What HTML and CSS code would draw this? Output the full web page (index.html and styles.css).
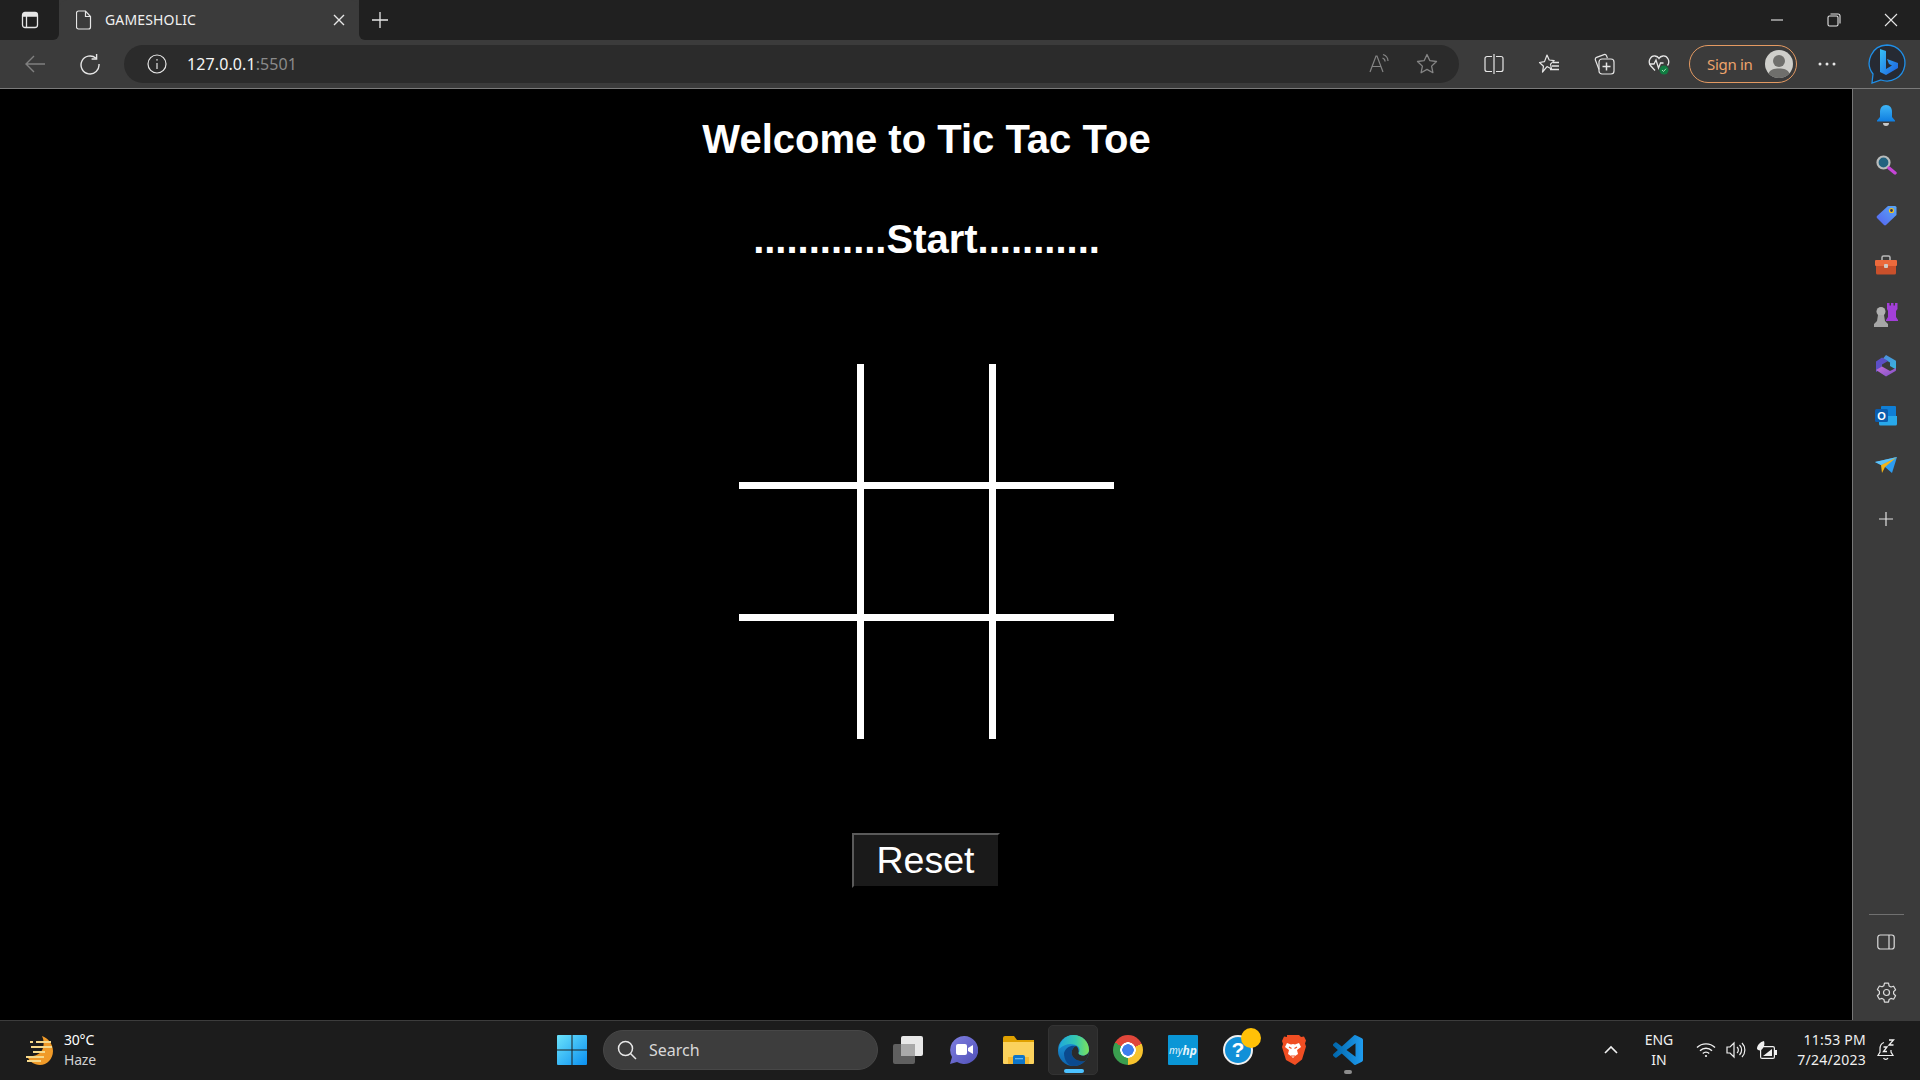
FILE: index.html
```html
<!DOCTYPE html>
<html lang="en">
<head>
    <meta charset="UTF-8" />
    <title>GAMESHOLIC</title>
    <link rel="stylesheet" href="styles.css">
</head>
<body>

<div class="browser">

    <!-- Вкладки -->
    <div class="tabstrip">
        <div class="tab-actions">
            <svg width="18" height="18" viewBox="0 0 18 18" fill="none" stroke="#e6e6e6" stroke-width="1.3"><rect x="1.5" y="1.5" width="15" height="15" rx="2.5"/><path d="M1.5 5h15M5.5 5v11.5"/><path d="M2 2h14v3H2z" fill="#e6e6e6" stroke="none"/></svg>
        </div>
        <div class="tab">
            <svg width="16" height="20" viewBox="0 0 16 20" fill="none" stroke="#e6e6e6" stroke-width="1.2"><path d="M2.5 1h7l5 5.5V17a2 2 0 0 1-2 2h-10a2 2 0 0 1-2-2V3a2 2 0 0 1 2-2z"/><path d="M9.5 1v5.5h5"/></svg>
            <span class="tab-title">GAMESHOLIC</span>
            <svg class="tab-close" width="16" height="16" viewBox="0 0 16 16" stroke="#e6e6e6" stroke-width="1.4"><path d="M3 3l10 10M13 3L3 13"/></svg>
        </div>
        <div class="tab-rest">
            <div class="new-tab">
                <svg width="18" height="18" viewBox="0 0 18 18" stroke="#e6e6e6" stroke-width="1.3"><path d="M9 1v16M1 9h16"/></svg>
            </div>
            <div class="window-controls">
                <div class="window-btn"><svg width="14" height="14" viewBox="0 0 14 14" stroke="#e6e6e6" stroke-width="1.1"><path d="M1 7h12"/></svg></div>
                <div class="window-btn"><svg width="14" height="14" viewBox="0 0 14 14" fill="none" stroke="#e6e6e6" stroke-width="1.1"><rect x="1" y="3" width="10" height="10" rx="1.5"/><path d="M3.5 1H11a2 2 0 0 1 2 2v7.5"/></svg></div>
                <div class="window-btn window-btn-close"><svg width="14" height="14" viewBox="0 0 14 14" stroke="#e6e6e6" stroke-width="1.1"><path d="M1 1l12 12M13 1L1 13"/></svg></div>
            </div>
        </div>
    </div>

    <!-- Панель адреса -->
    <div class="toolbar">
        <div class="tool-btn">
            <svg width="22" height="20" viewBox="0 0 22 20" fill="none" stroke="#808080" stroke-width="1.4"><path d="M21 10H2M10 2l-8 8 8 8"/></svg>
        </div>
        <div class="tool-btn">
            <svg width="22" height="22" viewBox="0 0 22 22" fill="none" stroke="#e6e6e6" stroke-width="1.4"><path d="M17 5.2A9 9 0 1 0 20 11"/><path d="M17.6 1v5h-5"/></svg>
        </div>
        <div class="address">
            <svg class="address-info" width="20" height="20" viewBox="0 0 20 20" fill="none" stroke="#e6e6e6" stroke-width="1.2"><circle cx="10" cy="10" r="9"/><path d="M10 9v6"/><path d="M10 5.2v1.4" stroke-width="1.5"/></svg>
            <span class="url">127.0.0.1<span class="url-port">:5501</span></span>
            <div class="address-end">
                <div class="address-btn">
                    <svg width="24" height="20" viewBox="0 0 24 20" fill="none" stroke="#858585" stroke-width="1.2"><path d="M1 19L7 3h1l6 16M3.4 13.5h8.4"/><path d="M14 1.5c3 1 5 3.3 5 6.5M13.5 5c1.6.6 2.6 1.8 2.6 3.4"/></svg>
                </div>
                <div class="address-btn">
                    <svg width="22" height="21" viewBox="0 0 22 21" fill="none" stroke="#858585" stroke-width="1.3"><path d="M11 1.5l2.9 6.2 6.6.8-4.9 4.6 1.3 6.6-5.9-3.3-5.9 3.3 1.3-6.6L1.5 8.500l6.600-.8z" stroke-linejoin="round"/></svg>
                </div>
            </div>
        </div>
        <div class="tool-group">
            <div class="tool-btn">
                <svg width="20" height="22" viewBox="0 0 20 22" fill="none" stroke="#e6e6e6" stroke-width="1.2"><path d="M8 3.500H3a2 2 0 0 0-2 2v11a2 2 0 0 0 2 2h5M12 3.500h5a2 2 0 0 1 2 2v11a2 2 0 0 1-2 2h-5M10 1v20"/></svg>
            </div>
            <div class="tool-btn">
                <svg width="22" height="22" viewBox="0 0 22 22" fill="none" stroke="#e6e6e6" stroke-width="1.2"><path d="M9 2l2.200 5 5 .6-3.700 3.500 1 5-4.500-2.500L4.500 19l1-5.800L1.500 9.500l5-.9z" stroke-linejoin="round"/><path d="M15 9.500h6M14 13h7M12 16.500h9" stroke-width="1.4"/></svg>
            </div>
            <div class="tool-btn">
                <svg width="22" height="22" viewBox="0 0 22 22" fill="none" stroke="#e6e6e6" stroke-width="1.2"><path d="M6 16.500L2.400 7a2 2 0 0 1 1.200-2.600L11 1.600a2 2 0 0 1 2.500 1.200l.9 2.300"/><rect x="6" y="6" width="15" height="15" rx="3"/><path d="M13.500 9.500v8M9.500 13.500h8" stroke-width="1.5"/></svg>
            </div>
            <div class="tool-btn">
                <svg width="22" height="22" viewBox="0 0 22 22" fill="none"><path d="M7 17.500L2.500 12.500C-.5 8.500 2.500 2.500 7 3c2 .2 3.300 1.200 4 2.500C11.700 4.200 13 3.200 15 3c4.500-.5 7.500 5.500 4.500 9.500" stroke="#e6e6e6" stroke-width="1.3"/><path d="M1 11h5l2-4 2.500 8 2-5h3" stroke="#e6e6e6" stroke-width="1.3"/><circle cx="16" cy="17" r="4.500" fill="#107c41"/><path d="M14 17l1.500 1.500 2.500-2.800" stroke="#9fe0b5" stroke-width="1"/></svg>
            </div>
        </div>
        <div class="signin">
            <span class="signin-text">Sign in</span>
            <span class="avatar">
                <svg width="28" height="28" viewBox="0 0 28 28"><circle cx="14" cy="14" r="14" fill="#cfcfcb"/><circle cx="14" cy="11" r="6" fill="#6f6f6c"/><path d="M3.500 23.500C5 19.500 9 18.500 14 18.500s9 1 10.500 5A14 14 0 0 1 14 28 14 14 0 0 1 3.500 23.500z" fill="#6f6f6c"/></svg>
            </span>
        </div>
        <div class="more-btn">
            <svg width="18" height="4" viewBox="0 0 18 4" fill="#e6e6e6"><circle cx="2" cy="2" r="1.500"/><circle cx="9" cy="2" r="1.500"/><circle cx="16" cy="2" r="1.500"/></svg>
        </div>
        <div class="bing-btn">
            <svg width="38" height="42" viewBox="0 0 38 42" fill="none">
                <defs><linearGradient id="bingB" x1="0" y1="0" x2="1" y2="1"><stop offset="0" stop-color="#36c0f5"/><stop offset="1" stop-color="#1c5fe0"/></linearGradient></defs>
                <path d="M19 2a18 18 0 1 1-6 35l-9 3 1-9A18 18 0 0 1 19 2z" stroke="#1f8fe8" stroke-width="1.3" fill="#262a33"/>
                <path d="M12 6l6 2v18l6-3.500-3-1.500-2-5 11 4v5l-12 7-6-3z" fill="url(#bingB)"/>
            </svg>
        </div>
    </div>

    <div class="page-row">
        <!-- Страница игры -->
        <main class="game">
            <h1 class="game-title">Welcome to Tic Tac Toe</h1>
            <h2 class="game-status">............Start...........</h2>
            <div class="board">
                <div class="cell"></div><div class="cell"></div><div class="cell"></div>
                <div class="cell"></div><div class="cell"></div><div class="cell"></div>
                <div class="cell"></div><div class="cell"></div><div class="cell"></div>
            </div>
            <button class="reset-btn">Reset</button>
        </main>

        <!-- Боковая панель -->
        <aside class="sidebar">
            <div class="side-item">
                <svg width="20" height="22" viewBox="0 0 20 22"><defs><linearGradient id="bell" x1="0" y1="0" x2="0" y2="1"><stop offset="0" stop-color="#3fb6f7"/><stop offset="1" stop-color="#0f7de0"/></linearGradient></defs><path d="M7 19h6a3 3 0 0 1-6 0z" fill="#c8c8c8"/><path d="M10 1c4 0 6 3 6 7v5l3 3.500v1H1v-1L4 13V8c0-4 2-7 6-7z" fill="url(#bell)"/></svg>
            </div>
            <div class="side-item">
                <svg width="22" height="22" viewBox="0 0 22 22"><circle cx="8.500" cy="8.500" r="6" fill="#22627f" stroke="#b9bcbc" stroke-width="2.200"/><path d="M14 14l6 5" stroke="#c545d6" stroke-width="3.400" stroke-linecap="round"/></svg>
            </div>
            <div class="side-item">
                <svg width="21" height="21" viewBox="0 0 21 21"><defs><linearGradient id="tagFill" x1="0" y1="1" x2="1" y2="0"><stop offset="0" stop-color="#5562f0"/><stop offset="1" stop-color="#59a8f5"/></linearGradient></defs><path d="M12 1h7a1.500 1.500 0 0 1 1.500 1.500V10L10 20a1.500 1.500 0 0 1-2 0L1 13a1.500 1.500 0 0 1 0-2z" fill="url(#tagFill)"/><circle cx="15.500" cy="5.500" r="2" fill="#2a2f60" stroke="#f5c518" stroke-width="1.200"/></svg>
            </div>
            <div class="side-item">
                <svg width="24" height="20" viewBox="0 0 24 20"><path d="M8 5V2.500A1.500 1.500 0 0 1 9.500 1h5A1.500 1.500 0 0 1 16 2.500V5" fill="none" stroke="#b9b9b9" stroke-width="1.500"/><rect x="1" y="5" width="22" height="6" rx="1" fill="#ec6a3c"/><path d="M2 11h20v7a1.500 1.500 0 0 1-1.500 1.500h-17A1.500 1.500 0 0 1 2 18z" fill="#c9502b"/><rect x="10" y="9" width="4" height="4" rx="1" fill="#cfc9c4"/></svg>
            </div>
            <div class="side-item">
                <svg width="24" height="24" viewBox="0 0 24 24"><path d="M13 0h2.500v2.500h1.500V0h2.500v2.500H21V0h2.500v6L22 8v6l2 3v1H12v-1l2-3V8l-1-2z" fill="#a23fd8"/><circle cx="7" cy="8.500" r="4.500" fill="#b0b0b0"/><path d="M4 12h6l1 6 3 3v3H0v-3l3-3z" fill="#a6a6a6"/></svg>
            </div>
            <div class="side-item">
                <svg width="22" height="23" viewBox="0 0 22 23"><defs><linearGradient id="m365a" x1="0" y1="0" x2="1" y2="1"><stop offset="0" stop-color="#4f8bdc"/><stop offset="1" stop-color="#36b5dd"/></linearGradient><linearGradient id="m365b" x1="0" y1="0" x2="1" y2="1"><stop offset="0" stop-color="#c56fd8"/><stop offset="1" stop-color="#7e4fc8"/></linearGradient></defs><path d="M11 1l9.500 5.500a1 1 0 0 1 .5.900v8L15 12V8.500L8 4.500z" fill="url(#m365a)"/><path d="M1 7.400l6-3.900L13 7 7 10.500v4L1 18z" fill="#5c4fc6"/><path d="M1 16l6-3.500 8 4.500 6-3v2a1 1 0 0 1-.5.900L11 22.500z" fill="url(#m365b)"/></svg>
            </div>
            <div class="side-item">
                <svg width="22" height="21" viewBox="0 0 22 21"><rect x="6" y="1" width="15" height="14" rx="1" fill="#0f7fd6"/><path d="M4 11h18v8a1.500 1.500 0 0 1-1.500 1.500H5.500A1.500 1.500 0 0 1 4 19z" fill="#28a8ea"/><rect x="0" y="4" width="13" height="13" rx="1.500" fill="#0b5cad"/><text x="6.500" y="14.500" class="outlook-o">O</text></svg>
            </div>
            <div class="side-item">
                <svg width="22" height="18" viewBox="0 0 22 18"><path d="M0 6l22-5-5 16-7-6z" fill="#2d9cf0"/><path d="M22 1L10 11l-3 6-1-8z" fill="#f2b418"/><path d="M22 1L6 9 0 6z" fill="#5fc3f8"/></svg>
            </div>
            <div class="side-item side-add">
                <svg width="16" height="16" viewBox="0 0 16 16" stroke="#e0e0e0" stroke-width="1.200"><path d="M8 1v14M1 8h14"/></svg>
            </div>
            <div class="side-footer">
                <div class="side-line"></div>
                <div class="side-item">
                    <svg width="18" height="16" viewBox="0 0 18 16" fill="none" stroke="#dcdcdc" stroke-width="1.200"><rect x=".8" y="1" width="16.400" height="14" rx="2.500"/><path d="M12 1v14"/></svg>
                </div>
                <div class="side-item">
                    <svg width="21" height="21" viewBox="0 0 21 21" fill="none" stroke="#dcdcdc" stroke-width="1.200" stroke-linejoin="round"><circle cx="10.500" cy="10.500" r="3"/><path d="M8.500 1.200h4l.6 2.700 1.900 1.100 2.600-.8 2 3.500-2 1.900v2.200l2 1.900-2 3.500-2.600-.8-1.900 1.100-.6 2.700h-4l-.6-2.700-1.900-1.100-2.600.8-2-3.500 2-1.900V9.400l-2-1.900 2-3.500 2.600.8 1.900-1.100z"/></svg>
                </div>
            </div>
        </aside>
    </div>
</div>

<!-- Панель задач -->
<footer class="taskbar">
    <div class="weather">
        <svg width="30" height="29" viewBox="0 0 30 29"><path d="M17 0c6 2 11 8 11 15 0 8-6 14-13 14-6 0-11-4-13-9 6 1 14-1 16-8 1-4 1-8-1-12z" fill="#f09a28"/><g stroke="#f6d98b" stroke-width="2.200"><path d="M5 6h3M11 6h15M6 11h21M8 16h12M1 21h18M2 25h14"/></g></svg>
        <div class="weather-text">
            <span>30°C</span>
            <span class="weather-desc">Haze</span>
        </div>
    </div>

    <svg class="start" width="30" height="30" viewBox="0 0 30 30"><defs><linearGradient id="win" x1="0" y1="0" x2="1" y2="1"><stop offset="0" stop-color="#6be3fb"/><stop offset="1" stop-color="#0a8ff0"/></linearGradient></defs><path d="M0 1a1 1 0 0 1 1-1h13.500v14.500H0zM15.500 0H29a1 1 0 0 1 1 1v13.500H15.500zM0 15.500h14.500V30H1a1 1 0 0 1-1-1zM15.500 15.500H30V29a1 1 0 0 1-1 1H15.500z" fill="url(#win)"/></svg>

    <div class="search">
        <svg width="20" height="20" viewBox="0 0 20 20" fill="none" stroke="#e8e8e8" stroke-width="1.500"><circle cx="8.500" cy="8.500" r="7"/><path d="M13.500 13.500L19 19"/></svg>
        <span class="search-text">Search</span>
    </div>

    <div class="task-apps">
        <div class="task-app">
            <svg width="30" height="28" viewBox="0 0 30 28"><rect x="0" y="8" width="22" height="20" rx="2" fill="#5f5f5f"/><rect x="8" y="0" width="22" height="20" rx="2" fill="#e8e8e8"/><rect x="8" y="8" width="14" height="12" fill="#a9a9a9"/></svg>
        </div>
        <div class="task-app">
            <svg width="30" height="30" viewBox="0 0 30 30"><defs><linearGradient id="meet" x1="0" y1="0" x2="1" y2="1"><stop offset="0" stop-color="#7f7fe0"/><stop offset="1" stop-color="#5050b8"/></linearGradient></defs><path d="M16 1a14 14 0 1 1-7 26l-7 2 2-7A14 14 0 0 1 16 1z" fill="url(#meet)"/><rect x="8" y="9" width="11" height="11" rx="2" fill="#fff"/><path d="M20 13l5-3v9l-5-3z" fill="#fff"/></svg>
        </div>
        <div class="task-app">
            <svg width="31" height="28" viewBox="0 0 31 28"><path d="M0 2a2 2 0 0 1 2-2h9l3 4h17v5H0z" fill="#e0a100"/><path d="M0 6h31v21a1 1 0 0 1-1 1H1a1 1 0 0 1-1-1z" fill="#fbd25d"/><path d="M5 21h21v7H5z" fill="#f4b933"/><path d="M10 21a2 2 0 0 1 2-2h8a2 2 0 0 1 2 2v7H10z" fill="#0e75c8"/><rect x="12" y="22" width="8" height="1.300" fill="#66b7ee"/></svg>
        </div>
        <div class="task-app task-app-active">
            <svg width="31" height="31" viewBox="0 0 31 31"><defs><linearGradient id="edgeBlue" x1="0" y1="0" x2="0" y2="1"><stop offset="0" stop-color="#1fa0de"/><stop offset="1" stop-color="#0d62ad"/></linearGradient><linearGradient id="edgeGreen" x1="0" y1="0" x2="1" y2="0"><stop offset="0" stop-color="#1fa8dc"/><stop offset=".55" stop-color="#35c8b0"/><stop offset="1" stop-color="#7de25a"/></linearGradient></defs><circle cx="15.500" cy="15.500" r="15.500" fill="url(#edgeBlue)"/><path d="M6 18C8 12 13 10 18 11c-4 2-5 6-4 9 2 5 8 7 13 6-4 4-8 5-11.500 5C10 31 6 25 6 18z" fill="#0b4a8f"/><path d="M31 15.500A15.500 15.500 0 0 1 27 26c-5 1-11-1-13-6-1-3 0-7 4-9 2 1 3 4 2.500 7 .5 2 3.500 2.500 4.500 2.500 3 0 6-2.500 6-5z" fill="#2b2b2b"/><path d="M15.500 0C24 0 31 6.500 31 15c0 3-3 5.500-6 5.500-2.500 0-4.500-1-4.500-2.500 1.500-2 1.500-4.500-.5-6.500-4-4-13-3.500-19 2.500C2 6 8 0 15.500 0z" fill="url(#edgeGreen)"/></svg>
            <span class="task-indicator"></span>
        </div>
        <div class="task-app">
            <span class="chrome"></span>
        </div>
        <div class="task-app">
            <span class="myhp">my<b class="myhp-bold">hp</b></span>
        </div>
        <div class="task-app">
            <span class="help">?</span>
            <span class="help-badge"></span>
        </div>
        <div class="task-app">
            <svg width="26" height="30" viewBox="0 0 26 30"><path d="M7 0h12l2 2 3-.5 2 4-1 3 1 3-4 13-7 5.500L6 25 2 12l1-3-1-3 2-4.500 3 .5z" fill="#f04e23"/><path d="M7 8l4 1.500 2-.5 2 .5L19 8l2 4-4 3 1 4-3 2-2 2-2-2-3-2 1-4-4-3z" fill="#fff"/><path d="M9 12l2.500 1.500M17 12l-2.500 1.500M11 21h4" stroke="#f04e23" stroke-width="1.200"/></svg>
        </div>
        <div class="task-app">
            <svg width="30" height="30" viewBox="0 0 100 100"><defs><linearGradient id="vsc" x1="0" y1="0" x2="1" y2="0"><stop offset="0" stop-color="#0065a9"/><stop offset="1" stop-color="#1f9cf0"/></linearGradient></defs><path fill-rule="evenodd" fill="url(#vsc)" d="M96.500 10.800L75.900.9a6.200 6.200 0 0 0-7.100 1.200L29.300 38 12.100 25a4.200 4.200 0 0 0-5.300.2l-5.500 5a4.200 4.200 0 0 0 0 6.200L16.200 50 1.300 63.600a4.200 4.200 0 0 0 0 6.200l5.500 5a4.200 4.200 0 0 0 5.300.2L29.300 62l39.500 35.900a6.200 6.200 0 0 0 7.100 1.200l20.600-9.900a6.200 6.200 0 0 0 3.500-5.600V16.400a6.200 6.200 0 0 0-3.500-5.600zM75 72.700L45 50l30-22.700z"/></svg>
            <span class="task-indicator task-indicator-idle"></span>
        </div>
    </div>

    <div class="tray">
        <div class="tray-chevron">
            <svg width="16" height="10" viewBox="0 0 16 10" fill="none" stroke="#f0f0f0" stroke-width="1.600"><path d="M2 8l6-6 6 6"/></svg>
        </div>
        <div class="tray-lang"><span>ENG</span><span>IN</span></div>
        <div class="tray-icon">
            <svg width="20" height="16" viewBox="0 0 20 16" fill="none" stroke="#f0f0f0" stroke-width="1.400"><path d="M1 5.500a13 13 0 0 1 18 0M4 8.700a8.500 8.500 0 0 1 12 0M6.800 11.500a4.500 4.500 0 0 1 6.400 0"/><circle cx="10" cy="14" r="1.100" fill="#f0f0f0" stroke="none"/></svg>
        </div>
        <div class="tray-icon">
            <svg width="20" height="18" viewBox="0 0 20 18" fill="none" stroke="#f0f0f0" stroke-width="1.200"><path d="M1 6h3l4-4v14l-4-4H1z"/><path d="M11 6a4 4 0 0 1 0 6M13.500 4a7 7 0 0 1 0 10M16 2a10 10 0 0 1 0 14"/></svg>
        </div>
        <div class="tray-icon">
            <svg width="21" height="19" viewBox="0 0 21 19"><path d="M1 8C1 4 4 1 8 0c1 3 0 7-3 9-1 .7-3 .5-4-1z" fill="#f0f0f0"/><rect x="4.600" y="5.600" width="13.800" height="11.800" rx="1.500" fill="none" stroke="#f0f0f0" stroke-width="1.200"/><path d="M7 15l9-7v7z" fill="#f0f0f0"/><rect x="19" y="9" width="2" height="5" fill="#f0f0f0"/></svg>
        </div>
        <div class="tray-clock"><span>11:53 PM</span><span>7/24/2023</span></div>
        <div class="tray-notify">
            <svg width="18" height="22" viewBox="0 0 18 22" fill="none" stroke="#f0f0f0" stroke-width="1.200"><path d="M7 3.500C4 4.500 3 7 3 10v3l-2 3.500h15L14 13v-2"/><path d="M6.500 19a2.500 2.500 0 0 0 4.500 0"/><path d="M6.500 8h3.500L6.500 12.500H10M12 1h4.500L12 6h4.500" stroke-width="1.300"/></svg>
        </div>
    </div>
</footer>

</body>
</html>
```

FILE: styles.css
```css
/* общие стили */
* {
    box-sizing: border-box;
}

body {
    margin: 0;
    width: 1920px;
    height: 1080px;
    overflow: hidden;
    background-color: #000;
    font-family: "Noto Sans", sans-serif;
    color: #fff;
}

.browser {
    height: 1020px;
    display: flex;
    flex-direction: column;
}

/* Вкладки */
.tabstrip {
    height: 40px;
    display: flex;
    background-color: #3b3b3b;
}

.tab-actions {
    width: 59px;
    display: flex;
    align-items: center;
    justify-content: center;
    background-color: #202020;
    border-bottom-right-radius: 6px;
}

.tab {
    width: 300px;
    padding: 0 12px 1px 17px;
    display: flex;
    align-items: center;
    background-color: #3b3b3b;
    border-radius: 8px 8px 0 0;
}

.tab-title {
    margin-left: 13px;
    font-size: 14px;
    letter-spacing: 0.15px;
    color: #f0f0f0;
}

.tab-close {
    margin-left: auto;
}

.tab-rest {
    flex: 1;
    display: flex;
    justify-content: space-between;
    background-color: #202020;
    border-bottom-left-radius: 6px;
}

.new-tab {
    width: 42px;
    display: flex;
    align-items: center;
    justify-content: center;
}

.window-controls {
    display: flex;
}

.window-btn {
    width: 57px;
    display: flex;
    align-items: center;
    justify-content: center;
}

.window-btn-close {
    width: 58px;
}

/* Панель адреса */
.toolbar {
    height: 49px;
    padding: 0 14px 1px 12px;
    display: flex;
    align-items: center;
    background-color: #3b3b3b;
    border-bottom: 1px solid #7a7a7a;
}

.tool-btn {
    width: 45px;
    height: 38px;
    margin-right: 10px;
    flex-shrink: 0;
    display: flex;
    align-items: center;
    justify-content: center;
}

.address {
    flex: 1;
    height: 38px;
    margin-left: 2px;
    padding: 0 17px 0 23px;
    display: flex;
    align-items: center;
    background-color: #2b2b2b;
    border-radius: 19px;
}

.url {
    margin-left: 20px;
    font-size: 16px;
    letter-spacing: 0.1px;
    color: #f5f5f5;
}

.url-port {
    color: #8a8a8a;
}

.address-end {
    margin-left: auto;
    display: flex;
    gap: 16px;
}

.address-btn {
    width: 30px;
    display: flex;
    justify-content: center;
}

.tool-group {
    margin-left: 12px;
    display: flex;
}

.signin {
    width: 108px;
    height: 38px;
    margin-left: -2px;
    padding: 0 3px 0 17px;
    display: flex;
    align-items: center;
    justify-content: space-between;
    border: 1px solid #e49a62;
    border-radius: 19px;
}

.signin-text {
    font-size: 15px;
    letter-spacing: -0.3px;
    color: #eda46c;
}

.avatar {
    display: flex;
}

.more-btn {
    width: 60px;
    display: flex;
    justify-content: center;
}

.bing-btn {
    width: 38px;
    margin-left: 11px;
    display: flex;
    justify-content: center;
}

.page-row {
    flex: 1;
    display: flex;
}

/* Страница игры */
.game {
    flex: 1;
    display: flex;
    flex-direction: column;
    align-items: center;
    background-color: #000;
    font-family: "Liberation Sans", Arial, sans-serif;
}

.game-title,
.game-status {
    margin: 27px 0;
    font-size: 40px;
    line-height: 46px;
    font-weight: bold;
}

.board {
    margin-top: 75px;
    display: grid;
    grid-template-columns: 118px 125px 118px;
    grid-template-rows: 118px 125px 118px;
    gap: 7px;
    background-color: #fff;
}

.cell {
    background-color: #000;
}

.reset-btn {
    width: 148px;
    height: 55px;
    margin: 94px 2px 0 0;
    padding: 0;
    background-color: #1a1a1a;
    border: 2px outset #5a5a5a;
    border-right-color: #1a1a1a;
    border-bottom-color: #1a1a1a;
    color: #fff;
    font-family: "Liberation Sans", Arial, sans-serif;
    font-size: 37.5px;
}

/* Боковая панель */
.sidebar {
    width: 67px;
    padding: 1px 1px 0 0;
    display: flex;
    flex-direction: column;
    background-color: #3b3b3b;
    box-shadow: -1px 0 0 #777;
}

.side-item {
    height: 50px;
    flex-shrink: 0;
    display: flex;
    align-items: center;
    justify-content: center;
}

.side-add {
    margin-top: 4px;
}

.side-footer {
    margin-top: auto;
    padding-bottom: 3px;
}

.side-line {
    width: 35px;
    height: 1px;
    margin: 0 auto 2px;
    background-color: #707070;
}

.outlook-o {
    font-family: "Liberation Sans", Arial, sans-serif;
    font-size: 11px;
    font-weight: bold;
    fill: #fff;
    text-anchor: middle;
}

/* Панель задач */
.taskbar {
    height: 60px;
    padding-bottom: 1px;
    display: flex;
    align-items: center;
    background-color: #1c1c1c;
    border-top: 1px solid #3c3c3c;
}

.weather {
    width: 557px;
    padding-left: 25px;
    display: flex;
    align-items: center;
}

.weather-text {
    margin-left: 9px;
    display: flex;
    flex-direction: column;
    font-size: 14px;
    line-height: 20px;
    letter-spacing: -0.2px;
}

.weather-desc {
    color: #d0d0d0;
}

.start {
    flex-shrink: 0;
}

.search {
    width: 275px;
    height: 40px;
    margin-left: 16px;
    padding-left: 13px;
    display: flex;
    align-items: center;
    background-color: #3d3d3d;
    border: 1px solid #474747;
    border-radius: 20px;
}

.search-text {
    margin-left: 12px;
    font-size: 16px;
    color: #d8d8d8;
}

.task-apps {
    margin-left: 5px;
    display: flex;
    gap: 5px;
}

.task-app {
    position: relative;
    width: 50px;
    height: 50px;
    display: flex;
    align-items: center;
    justify-content: center;
    border-radius: 5px;
}

.task-app-active {
    background-color: #2b2b2b;
    border: 1px solid #333;
}

.task-indicator {
    position: absolute;
    left: 15px;
    bottom: 1px;
    width: 20px;
    height: 4px;
    border-radius: 2px;
    background-color: #4cc2ff;
}

.task-indicator-idle {
    left: 21px;
    width: 8px;
    background-color: #8c8c8c;
}

.chrome {
    width: 30px;
    height: 30px;
    border-radius: 50%;
    background:
        radial-gradient(circle, #3f7fee 0 5.5px, #fff 6px 7.5px, transparent 8px),
        conic-gradient(from -60deg, #e0463a 0 125deg, #f7c32e 125deg 240deg, #3a9e4f 240deg);
}

.myhp {
    width: 30px;
    height: 30px;
    display: flex;
    align-items: center;
    justify-content: center;
    background-color: #0a96d6;
    border-radius: 1px;
    font-size: 10px;
    font-style: italic;
    color: #e6f5fc;
}

.myhp-bold {
    font-size: 12px;
}

.help {
    width: 30px;
    height: 30px;
    display: flex;
    align-items: center;
    justify-content: center;
    background-color: #1190d8;
    border: 2px solid #f0f0f0;
    border-radius: 50%;
    font-family: "Liberation Sans", Arial, sans-serif;
    font-size: 21px;
    font-weight: bold;
}

/* значок поверх иконки */
.help-badge {
    position: absolute;
    top: 3px;
    right: 2px;
    width: 20px;
    height: 20px;
    background-color: #ffc107;
    border-radius: 50%;
}

.tray {
    margin-left: auto;
    padding-right: 22px;
    display: flex;
    align-items: center;
}

.tray-chevron {
    width: 30px;
    display: flex;
    justify-content: center;
}

.tray-lang {
    width: 40px;
    margin-left: 13px;
    display: flex;
    flex-direction: column;
    align-items: center;
    font-size: 14px;
    line-height: 20px;
    color: #f0f0f0;
}

.tray-icon {
    width: 24px;
    margin-left: 6px;
    display: flex;
    justify-content: center;
}

.tray-lang + .tray-icon {
    margin-left: 15px;
}

.tray-clock {
    width: 90px;
    margin-left: -2px;
    display: flex;
    flex-direction: column;
    align-items: flex-end;
    font-size: 14px;
    letter-spacing: 0.25px;
    line-height: 20px;
    color: #f0f0f0;
}

.tray-notify {
    width: 24px;
    margin-left: 8px;
    display: flex;
    justify-content: center;
}
```
